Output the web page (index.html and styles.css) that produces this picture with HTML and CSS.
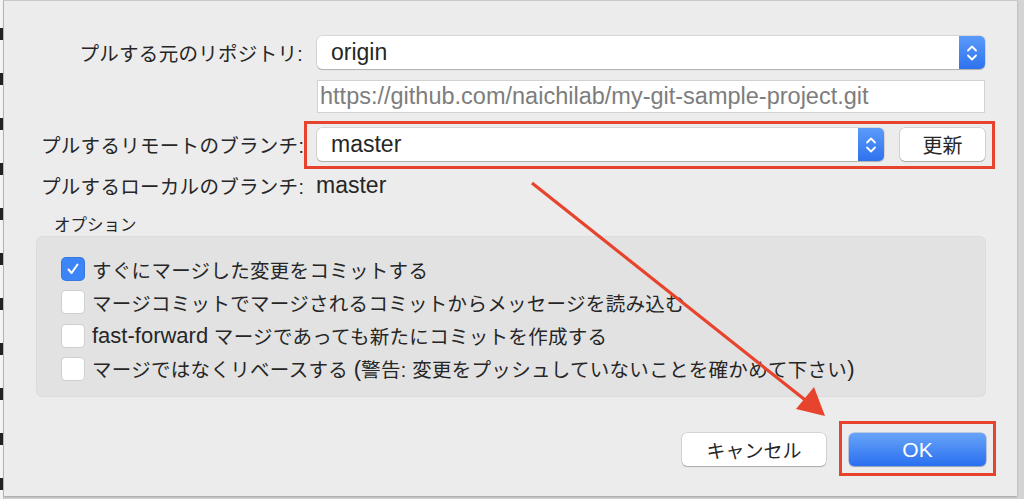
FILE: index.html
```html
<!DOCTYPE html>
<html lang="ja">
<head>
  <meta charset="UTF-8">
  <title>プル</title>
  <link rel="stylesheet" href="styles.css">
</head>
<body>
  <div class="backdrop"></div>
  <div class="sheet">
    <div class="form-rows">
      <div class="row">
        <label class="row-label">プルする元のリポジトリ:</label>
        <div class="popup">
          <span class="popup-value">origin</span>
          <span class="stepper">
            <svg width="12" height="20" viewBox="0 0 12 20"><path d="M2 7.5 L6 3.5 L10 7.5 M2 12.5 L6 16.5 L10 12.5" fill="none" stroke="#fff" stroke-width="1.8" stroke-linecap="round" stroke-linejoin="round"/></svg>
          </span>
        </div>
      </div>
      <div class="row row-url">
        <span class="row-label"></span>
        <div class="url-field">https://github.com/naichilab/my-git-sample-project.git</div>
      </div>
      <div class="row row-branch">
        <label class="row-label">プルするリモートのブランチ:</label>
        <div class="branch-controls">
          <div class="popup popup-branch">
            <span class="popup-value">master</span>
            <span class="stepper">
              <svg width="12" height="20" viewBox="0 0 12 20"><path d="M2 7.5 L6 3.5 L10 7.5 M2 12.5 L6 16.5 L10 12.5" fill="none" stroke="#fff" stroke-width="1.8" stroke-linecap="round" stroke-linejoin="round"/></svg>
            </span>
          </div>
          <button class="btn btn-refresh">更新</button>
          <span class="mark mark-branch"></span>
        </div>
      </div>
      <div class="row row-local">
        <span class="row-label">プルするローカルのブランチ:</span>
        <span class="local-value">master</span>
      </div>
    </div>

    <div class="options-title">オプション</div>
    <div class="options">
      <div class="option"><span class="check checked"><svg width="14" height="14" viewBox="0 0 14 14"><path d="M2.5 7.5 L5.6 11 L11.5 2.5" fill="none" stroke="#fff" stroke-width="2" stroke-linecap="round" stroke-linejoin="round"/></svg></span>すぐにマージした変更をコミットする</div>
      <div class="option"><span class="check"></span>マージコミットでマージされるコミットからメッセージを読み込む</div>
      <div class="option"><span class="check"></span><span class="latin">fast-forward</span>&nbsp;マージであっても新たにコミットを作成する</div>
      <div class="option"><span class="check"></span>マージではなくリベースする&nbsp;<span class="latin">(</span>警告: 変更をプッシュしていないことを確かめて下さい<span class="latin">)</span></div>
    </div>

    <div class="actions">
      <button class="btn btn-cancel">キャンセル</button>
      <div class="ok-wrap">
        <button class="btn btn-ok">OK</button>
        <span class="mark mark-ok"></span>
      </div>
    </div>

    <svg class="arrow" width="1024" height="499" viewBox="0 0 1024 499">
      <line x1="533" y1="183" x2="810" y2="403" stroke="#e8432c" stroke-width="3.2"/>
      <polygon points="826,416 797,409 815,387" fill="#e8432c"/>
    </svg>
  </div>
</body>
</html>
```

FILE: styles.css
```css
* {
  margin: 0;
  padding: 0;
  box-sizing: border-box;
}

body {
  width: 1024px;
  height: 499px;
  overflow: hidden;
  background: #d4d4d4;
  font-family: "Liberation Sans", "Noto Sans CJK JP", sans-serif;
  color: #262626;
  display: flex;
}

.backdrop {
  width: 4px;
  height: 499px;
  background: repeating-linear-gradient(180deg, #f4f4f4 0, #f4f4f4 28px, #222 28px, #222 40px, #f4f4f4 40px, #f4f4f4 45px);
  border-right: 1px solid #c4c4c4;
  flex: none;
}

.sheet {
  position: relative;
  width: 1013px;
  height: 496px;
  background: #ececec;
  border-top: 1px solid #c8c8c8;
  box-shadow: 0 1px 2px rgba(0, 0, 0, 0.25);
  padding: 35px 0 0 32px;
}

.form-rows {
  padding-left: 5px;
}

.row {
  display: flex;
  align-items: center;
  height: 33px;
}

.row-label {
  width: 262px;
  text-align: right;
  font-size: 19.5px;
  letter-spacing: 0.3px;
  flex: none;
  margin-right: 14px;
  white-space: nowrap;
}

.row-url {
  margin-top: 11px;
}

.row-branch {
  margin-top: 15px;
}

.row-local {
  margin-top: 9px;
  height: 31px;
}

.popup {
  width: 668px;
  height: 33px;
  background: #fff;
  border-radius: 5px;
  box-shadow: 0 0 0 0.5px rgba(0, 0, 0, 0.18), 0 1px 1px rgba(0, 0, 0, 0.18);
  display: flex;
  align-items: center;
  justify-content: space-between;
}

.popup-value {
  font-size: 23px;
  padding-left: 14px;
}

.stepper {
  width: 26px;
  height: 33px;
  border-radius: 0 5px 5px 0;
  background: linear-gradient(180deg, #5a9bfa 0%, #2f72ee 100%);
  display: flex;
  align-items: center;
  justify-content: center;
}

.url-field {
  width: 668px;
  height: 33px;
  background: #fff;
  border: 1px solid #d2d2d2;
  color: #7d7d7d;
  font-size: 23.5px;
  padding-left: 2px;
  display: flex;
  align-items: center;
  white-space: nowrap;
  overflow: hidden;
}

.branch-controls {
  position: relative;
  display: flex;
  align-items: center;
  gap: 16px;
}

.popup-branch {
  width: 567px;
}

.btn {
  font-family: inherit;
  font-size: 19px;
  color: #262626;
  background: #fff;
  border: none;
  border-radius: 5px;
  box-shadow: 0 0 0 0.5px rgba(0, 0, 0, 0.2), 0 1px 1px rgba(0, 0, 0, 0.2);
  height: 33px;
}

.btn-refresh {
  width: 85px;
  font-size: 20px;
}

.mark {
  position: absolute;
  border: 3px solid #e8432c;
}

.mark-branch {
  left: -13px;
  right: -10px;
  top: -7px;
  bottom: -8px;
}

.local-value {
  font-size: 23px;
  margin-left: -1px;
}

.options-title {
  font-size: 16.5px;
  margin: 15px 0 0 18px;
  height: 19px;
  line-height: 19px;
}

.options {
  width: 950px;
  height: 161px;
  margin-top: 1px;
  background: #e2e2e2;
  border-radius: 6px;
  border: 1px solid #dcdcdc;
  padding: 21px 0 0 25px;
  display: flex;
  flex-direction: column;
  gap: 11.3px;
}

.option {
  display: flex;
  align-items: center;
  height: 22px;
  font-size: 19.5px;
  letter-spacing: 0.3px;
  white-space: nowrap;
}

.latin {
  font-size: 22px;
  letter-spacing: 0;
}

.check {
  width: 22px;
  height: 22px;
  flex: none;
  margin-right: 8px;
  background: #fff;
  border-radius: 4px;
  box-shadow: 0 0 0 1px #cfcfcf;
  display: flex;
  align-items: center;
  justify-content: center;
}

.check.checked {
  background: #3c85f6;
  box-shadow: 0 0 0 1px #3678e0;
}

.actions {
  display: flex;
  justify-content: flex-end;
  align-items: center;
  width: 950px;
  margin-top: 36px;
  gap: 23px;
}

.btn-cancel {
  width: 144px;
}

.ok-wrap {
  position: relative;
}

.btn-ok {
  width: 137px;
  color: #fff;
  font-size: 21px;
  background: linear-gradient(180deg, #68a4f8 0%, #2a6ff0 100%);
  box-shadow: 0 0 0 0.5px rgba(0, 60, 180, 0.4), 0 1px 1px rgba(0, 0, 0, 0.2);
}

.mark-ok {
  left: -10px;
  right: -10px;
  top: -12px;
  bottom: -10px;
}

.arrow {
  position: absolute;
  left: -5px;
  top: -1px;
  pointer-events: none;
}
```
